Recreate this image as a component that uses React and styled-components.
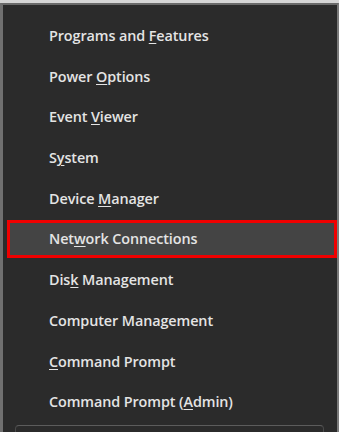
import React from 'react'
import styled, {createGlobalStyle} from 'styled-components'

const GlobalStyle = createGlobalStyle`
    html, body {
        margin: 0;
        padding: 0;
        background: #d6d6d6;
    }
    body {
        font-family: "Open Sans", "Noto Sans", "Liberation Sans", sans-serif;
    }
`

const Page = styled.div`
    width: 339px;
    height: 432px;
    overflow: hidden;
    padding-top: 3px;
    box-sizing: border-box;
    background: #d6d6d6;
`

const Menu = styled.div`
    display: flex;
    flex-direction: column;
    height: 100%;
    background: #2b2b2b;
    border-top: 2px solid #6a6a6a;
    border-left: 3px solid #707070;
    border-right: 2px solid #7a7a7a;
    padding-top: 10px;
    box-sizing: border-box;
`

const Item = styled.div`
    display: flex;
    align-items: center;
    height: 41px;
    padding-left: 46px;
    box-sizing: border-box;
    color: #e4e4e4;
    font-size: 14.4px;
    font-weight: 600;
    letter-spacing: -0.1px;
    white-space: pre;
    cursor: default;

    ${({$active}) => $active && `
        height: 39px;
        margin: 1px 0 1px 4px;
        padding-left: 39px;
        background: #444444;
        border: 3px solid #f00000;
    `}
`

const Label = styled.span``

const Key = styled.span`
    text-decoration: underline;
    text-decoration-thickness: 1px;
    text-underline-offset: 2px;
`

const Separator = styled.div`
    margin: 3px 13px 0 12px;
    height: 6px;
    border-top: 1px solid #5c5c5c;
    border-left: 1px solid #4a4a4a;
    border-top-left-radius: 4px;
    border-right: 1px solid #4a4a4a;
    border-top-right-radius: 4px;
`

const items = [
    ['Programs and ', 'F', 'eatures'],
    ['Power ', 'O', 'ptions'],
    ['Event ', 'V', 'iewer'],
    ['S', 'y', 'stem'],
    ['Device ', 'M', 'anager'],
    ['Net', 'w', 'ork Connections'],
    ['Dis', 'k', ' Management'],
    ['Computer Mana', 'g', 'ement'],
    ['', 'C', 'ommand Prompt'],
    ['Command Prompt (', 'A', 'dmin)'],
]

const App = () => {
    return (
        <>
            <GlobalStyle />
            <Page>
                <Menu>
                    {items.map(([before, key, after], i) => (
                        <Item key={i} $active={i === 5}>
                            <Label>{before}<Key>{key}</Key>{after}</Label>
                        </Item>
                    ))}
                    <Separator />
                </Menu>
            </Page>
        </>
    )
}

export default App
